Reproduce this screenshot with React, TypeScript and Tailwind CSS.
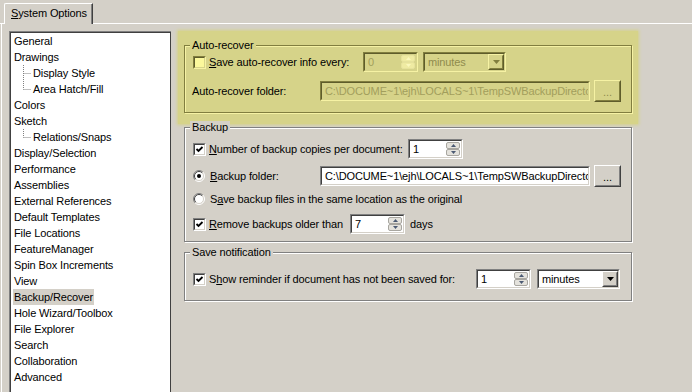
import React from 'react'

const PATH = 'C:\\DOCUME~1\\ejh\\LOCALS~1\\TempSWBackupDirectory'

// 0 = top level, 1 = child with line going on, 2 = last child
const items: [string, number][] = [
  ['General', 0],
  ['Drawings', 0],
  ['Display Style', 1],
  ['Area Hatch/Fill', 2],
  ['Colors', 0],
  ['Sketch', 0],
  ['Relations/Snaps', 2],
  ['Display/Selection', 0],
  ['Performance', 0],
  ['Assemblies', 0],
  ['External References', 0],
  ['Default Templates', 0],
  ['File Locations', 0],
  ['FeatureManager', 0],
  ['Spin Box Increments', 0],
  ['View', 0],
  ['Backup/Recover', 0],
  ['Hole Wizard/Toolbox', 0],
  ['File Explorer', 0],
  ['Search', 0],
  ['Collaboration', 0],
  ['Advanced', 0],
]

function Sunken({ hl, className, children }: { hl?: boolean; className?: string; children?: React.ReactNode }) {
  return (
    <div
      className={
        (hl
          ? 'border border-t-[#817e3f] border-l-[#817e3f] border-r-[#f6f2a4] border-b-[#f6f2a4] '
          : 'border border-t-[#808080] border-l-[#808080] border-r-white border-b-white ') + (className ?? '')
      }
    >
      <div
        className={
          hl
            ? 'h-full flex items-center border border-t-[#5e5c2b] border-l-[#5e5c2b] border-r-[#d6d389] border-b-[#d6d389] bg-[#d6d389]'
            : 'h-full flex items-center border border-t-[#404040] border-l-[#404040] border-r-[#d4d0c8] border-b-[#d4d0c8] bg-white'
        }
      >
        {children}
      </div>
    </div>
  )
}

function Raised({ hl, className, children }: { hl?: boolean; className?: string; children?: React.ReactNode }) {
  return (
    <div
      className={
        (hl
          ? 'border border-t-[#f6f2a4] border-l-[#f6f2a4] border-r-[#5e5c2b] border-b-[#5e5c2b] bg-[#d6d389] '
          : 'border border-t-white border-l-white border-r-[#404040] border-b-[#404040] bg-[#d4d0c8] ') + (className ?? '')
      }
    >
      <div
        className={
          hl
            ? 'h-full flex items-center justify-center border border-t-[#d6d389] border-l-[#d6d389] border-r-[#817e3f] border-b-[#817e3f]'
            : 'h-full flex items-center justify-center border border-t-[#d4d0c8] border-l-[#d4d0c8] border-r-[#808080] border-b-[#808080]'
        }
      >
        {children}
      </div>
    </div>
  )
}

function Check({ checked, hl }: { checked?: boolean; hl?: boolean }) {
  return (
    <Sunken hl={hl} className="w-[13px] h-[13px] shrink-0">
      <div className={hl ? 'w-full h-full bg-[#fbf89c]' : 'w-full h-full'}>
        {checked && (
          <svg width="9" height="9" viewBox="0 0 9 9">
            <path d="M1.5 4 L3.5 6 L7.5 2" fill="none" stroke="#000" strokeWidth="1.8" />
          </svg>
        )}
      </div>
    </Sunken>
  )
}

function Radio({ checked }: { checked?: boolean }) {
  return (
    <svg width="12" height="12" viewBox="0 0 12 12" className="shrink-0">
      <circle cx="6" cy="6" r="5" fill="#fff" />
      <path d="M2.1 9.9 A5.5 5.5 0 0 1 9.9 2.1" fill="none" stroke="#808080" />
      <path d="M9.9 2.1 A5.5 5.5 0 0 1 2.1 9.9" fill="none" stroke="#fff" />
      <path d="M2.8 9.2 A4.5 4.5 0 0 1 9.2 2.8" fill="none" stroke="#404040" />
      <path d="M9.2 2.8 A4.5 4.5 0 0 1 2.8 9.2" fill="none" stroke="#d4d0c8" />
      {checked && <circle cx="6" cy="6" r="2" fill="#000" />}
    </svg>
  )
}

function Spin({ value, hl }: { value: string; hl?: boolean }) {
  return (
    <Sunken hl={hl} className="w-[55px] h-[20px] shrink-0">
      <span className={hl ? 'flex-1 pl-[3px] text-[#a29e5c]' : 'flex-1 pl-[3px]'}>{value}</span>
      <div className="flex flex-col w-[15px] h-full pr-[1px] py-[1px]">
        {[0, 1].map(i => (
          <div
            key={i}
            className={
              hl
                ? 'flex-1 flex items-center justify-center rounded-[2px] border border-[#e6e29c] bg-[#efeba2]'
                : 'flex-1 flex items-center justify-center rounded-[2px] border border-[#a8a6a0] bg-[#e4e2dc]'
            }
          >
            <svg width="5" height="3" viewBox="0 0 5 3">
              <path d={i === 0 ? 'M0 3 L2.5 0 L5 3 Z' : 'M0 0 L2.5 3 L5 0 Z'} fill={hl ? '#fbf8bd' : '#4b5a73'} />
            </svg>
          </div>
        ))}
      </div>
    </Sunken>
  )
}

function Combo({ value, hl }: { value: string; hl?: boolean }) {
  return (
    <Sunken hl={hl} className="w-[83px] h-[20px] shrink-0">
      <span className={hl ? 'flex-1 pl-[3px] text-[#8f8b4d]' : 'flex-1 pl-[3px]'}>{value}</span>
      <Raised hl={hl} className="w-[16px] h-[16px]">
        <svg width="7" height="4" viewBox="0 0 7 4">
          <path d="M0 0 L7 0 L3.5 4 Z" fill={hl ? '#817e3f' : '#000'} />
        </svg>
      </Raised>
    </Sunken>
  )
}

function PathBox({ hl }: { hl?: boolean }) {
  return (
    <Sunken hl={hl} className="w-[270px] h-[20px] shrink-0">
      <span
        className={
          hl
            ? 'block w-full overflow-hidden pl-[3px] whitespace-nowrap text-[#a29e5c]'
            : 'block w-full overflow-hidden pl-[3px] whitespace-nowrap'
        }
      >
        {PATH}
      </span>
    </Sunken>
  )
}

function Dots({ hl }: { hl?: boolean }) {
  return (
    <Raised hl={hl} className="ml-[4px] w-[27px] h-[22px] shrink-0">
      <span className={hl ? 'pt-[2px] text-[#8f8b4d]' : 'pt-[2px]'}>...</span>
    </Raised>
  )
}

export default function App() {
  return (
    <div className="w-[692px] h-[392px] overflow-hidden bg-[#d4d0c8] font-['Liberation_Sans',Arial,sans-serif] text-[11px] leading-[13px] tracking-[-0.12px] text-black select-none">
      {/* tab strip */}
      <div className="flex h-[24px]">
        <div className="w-[4px] border-b border-white" />
        <div className="mt-[3px] w-[89px] h-[21px] border-t border-l border-white border-r border-r-[#404040] rounded-tl-[2px] shadow-[inset_-1px_0_0_#808080] pl-[6px] pt-[3px] whitespace-nowrap">
          <u>S</u>ystem Options
        </div>
        <div className="flex-1 border-b border-white" />
      </div>

      <div className="flex h-[368px]">
        {/* tree list */}
        <div className="ml-[1px] border-l border-white pl-[7px] pt-[7px]">
          <div className="w-[162px] h-[370px] border-l border-t border-[#808080]">
            <div className="h-full border-l border-t border-r border-[#404040] bg-white">
              {items.map(([label, lvl]) => (
                <div key={label} className="flex items-center h-[16px] pl-[2px] whitespace-nowrap">
                  {lvl > 0 && (
                    <svg width="19" height="16" viewBox="0 0 19 16" className="shrink-0">
                      <path
                        d={lvl === 1 ? 'M10.5 0 V16 M10.5 8.5 H18' : 'M10.5 0 V8.5 M10.5 8.5 H18'}
                        stroke="#808080"
                        strokeDasharray="1 1"
                        fill="none"
                      />
                    </svg>
                  )}
                  <span className={label === 'Backup/Recover' ? 'px-[1px] bg-[#d4d0c8] leading-[16px]' : 'px-[1px] leading-[16px]'}>
                    {label}
                  </span>
                </div>
              ))}
            </div>
          </div>
        </div>

        {/* options */}
        <div className="ml-[7px] pt-[7px] flex flex-col">
          <div className="w-[460px] h-[93px] bg-[#d6d389] shadow-[0_0_3px_1px_#d6d389] pl-[6px] pt-[8px]">
            <fieldset className="w-[448px] border border-[#817e3f] shadow-[inset_1px_1px_0_#f6f2a4,1px_1px_0_#f6f2a4] pb-[10px]">
              <legend className="ml-[5px] px-[2px] leading-[13px] bg-[#d6d389]">Auto-recover</legend>
              <div className="flex items-center h-[20px] pl-[8px]">
                <Check hl />
                <span className="ml-[3px] w-[154px] whitespace-nowrap">
                  <u>S</u>ave auto-recover info every:
                </span>
                <Spin value="0" hl />
                <div className="ml-[5px]">
                  <Combo value="minutes" hl />
                </div>
              </div>
              <div className="flex items-center h-[22px] mt-[8px] pl-[7px]">
                <span className="w-[128px] whitespace-nowrap">Auto-recover folder:</span>
                <PathBox hl />
                <Dots hl />
              </div>
            </fieldset>
          </div>

          <fieldset className="ml-[6px] mt-[-3px] w-[448px] border border-[#808080] shadow-[inset_1px_1px_0_#fff,1px_1px_0_#fff] pb-[7px]">
            <legend className="ml-[5px] px-[2px] leading-[13px] bg-[#d4d0c8]">Backup</legend>
            <div className="flex items-center h-[20px] mt-[5px] pl-[8px]">
              <Check checked />
              <span className="ml-[3px] w-[199px] whitespace-nowrap">
                <u>N</u>umber of backup copies per document:
              </span>
              <Spin value="1" />
            </div>
            <div className="flex items-center h-[22px] mt-[6px] pl-[8px]">
              <Radio checked />
              <span className="ml-[5px] w-[110px] whitespace-nowrap">
                <u>B</u>ackup folder:
              </span>
              <PathBox />
              <Dots />
            </div>
            <div className="flex items-center h-[16px] mt-[4px] pl-[8px]">
              <Radio />
              <span className="ml-[5px] whitespace-nowrap">
                S<u>a</u>ve backup files in the same location as the original
              </span>
            </div>
            <div className="flex items-center h-[20px] mt-[7px] pl-[8px]">
              <Check checked />
              <span className="ml-[3px] w-[141px] whitespace-nowrap">
                <u>R</u>emove backups older than
              </span>
              <Spin value="7" />
              <span className="ml-[5px]">days</span>
            </div>
          </fieldset>

          <fieldset className="ml-[6px] mt-[4px] w-[448px] border border-[#808080] shadow-[inset_1px_1px_0_#fff,1px_1px_0_#fff] pb-[11px]">
            <legend className="ml-[5px] px-[2px] leading-[13px] bg-[#d4d0c8]">Save notification</legend>
            <div className="flex items-center h-[20px] mt-[10px] pl-[8px]">
              <Check checked />
              <span className="ml-[3px] w-[267px] whitespace-nowrap">
                S<u>h</u>ow reminder if document has not been saved for:
              </span>
              <Spin value="1" />
              <div className="ml-[6px]">
                <Combo value="minutes" />
              </div>
            </div>
          </fieldset>
        </div>
      </div>
    </div>
  )
}
